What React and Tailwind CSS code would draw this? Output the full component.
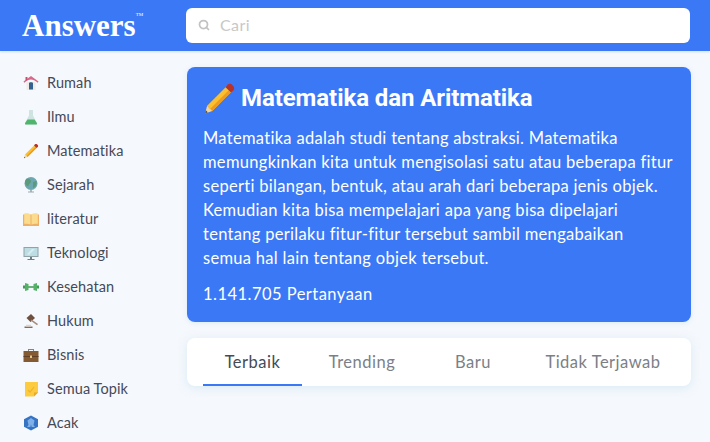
import React from 'react';
import { Search } from 'lucide-react';

const Pencil = ({ className }) => (
  <svg viewBox="0 0 32 32" className={className}>
    <path d="M22 5l5 5L9 28l-5-5z" fill="#fbc02d" />
    <path d="M25 8l2 2L9 28l-2-2z" fill="#ee9a1f" />
    <path d="M22 5l2-2.500c1-1 3-1 4 0l1.500 1.500c1 1 1 3 0 4L27 10z" fill="#b8322a" />
    <path d="M4 23l5 5-7 2.500z" fill="#f2d5a0" />
    <path d="M2.800 27.500l1.800 1.900-2.600 1.100z" fill="#4a4a4a" />
  </svg>
);

const House = () => (
  <svg viewBox="0 0 16 16" className="h-4 w-4">
    <path d="M3.500 7h9v8h-9z" fill="#f0ebe4" />
    <path d="M6 8c0-1 4-1 4 0v6.500H6z" fill="#35608f" />
    <path d="M8 1L0.500 6.500l.8 1.300C4 5.500 6 4.500 8 4.500s4 1 6.700 3.300l.8-1.300z" fill="#d9688a" />
    <path d="M2.500 2h2v2.500l-2 1.500z" fill="#c4546c" />
  </svg>
);

const Flask = () => (
  <svg viewBox="0 0 16 16" className="h-4 w-4">
    <path d="M6 1h4v5.500l4 7.500c.3 1-.3 1.500-1 1.500H3c-.7 0-1.300-.5-1-1.500l4-7.500z" fill="#cfe3e0" />
    <path d="M4.500 10.500h7l2.500 3.700c.2.800-.3 1.300-1 1.300H3c-.7 0-1.200-.5-1-1.300z" fill="#4fb56c" />
  </svg>
);

const Globe = () => (
  <svg viewBox="0 0 16 16" className="h-4 w-4">
    <circle cx="8" cy="6.500" r="6.500" fill="#6da7b0" />
    <path d="M4 1.500c3 0 4 1.500 4 3s-2 2-2.500 4-3.500-1-3.500-3 1-4 2-4zM10 5l3.500-1c.5 3-1 6-3.500 7z" fill="#5d9a7c" />
    <path d="M7.200 13h1.600v1.800H7.200zM5 14.600h6v.9H5z" fill="#9aaab2" />
  </svg>
);

const Book = () => (
  <svg viewBox="0 0 16 16" className="h-4 w-4">
    <path d="M0 3.500h16v11.500H0z" fill="#eeb066" />
    <path d="M1.200 2.500C4 2 6.500 2.500 7.500 3.500v10c-1.500-.8-4-1-6.300-.7zM14.800 2.500C12 2 9.500 2.500 8.500 3.500v10c1.500-.8 4-1 6.300-.7z" fill="#fbdc8e" />
  </svg>
);

const Monitor = () => (
  <svg viewBox="0 0 16 16" className="h-4 w-4">
    <path d="M0.500 2h15v10h-15z" fill="#8fa3a8" />
    <path d="M1.500 3h13v8h-13z" fill="#bcdde3" />
    <path d="M4 9l5-5h3l-6 6z" fill="#d7edf1" />
    <path d="M7 12h2v2H7zM4.500 14h7v.9h-7z" fill="#6f7d82" />
  </svg>
);

const Dumbbell = () => (
  <svg viewBox="0 0 16 16" className="h-4 w-4">
    <path d="M5 7h6v2H5z" fill="#6fae7c" />
    <path d="M0 6.500h2v3H0zM14 6.500h2v3h-2z" fill="#3f9a55" />
    <path d="M2 4l3.500 1v6L2 12zM14 4l-3.500 1v6l3.500 1z" fill="#53b266" />
  </svg>
);

const Gavel = () => (
  <svg viewBox="0 0 16 16" className="h-4 w-4">
    <path d="M3.500 5L8 1l4 4-4.500 4z" fill="#6f4f3e" />
    <path d="M8.500 6.500l6.500 4.500-1 1.300-6.500-4.800z" fill="#a58a78" />
    <path d="M1.500 13.500h8V15h-8z" fill="#8a6a55" />
    <path d="M3 11.800h5v1.700H3z" fill="#ddd3cb" />
  </svg>
);

const Briefcase = () => (
  <svg viewBox="0 0 16 16" className="h-4 w-4">
    <path d="M5 4V2h6v2h-1V3H6v1z" fill="#8d8177" />
    <path d="M0.500 4h15v11h-15z" fill="#845a32" />
    <path d="M0.500 9h15v1h-15z" fill="#5f4026" />
    <path d="M7 8.500h2v2.500H7z" fill="#e8c886" />
  </svg>
);

const Note = () => (
  <svg viewBox="0 0 16 16" className="h-4 w-4">
    <path d="M2 1h13v10.500L11 15.500H2z" fill="#fccb3f" />
    <path d="M15 11.500l-4 4v-4z" fill="#e8a92a" />
    <path d="M5 9l2 2 4-5" stroke="#efb32c" strokeWidth="1.200" fill="none" />
  </svg>
);

const Dice = () => (
  <svg viewBox="0 0 16 16" className="h-4 w-4">
    <path d="M8 0.500l7 3.700v7.600l-7 3.700-7-3.700V4.200z" fill="#3574c4" />
    <path d="M8 3l3.500 2.500-1 4.500 1.500 2H8.700L8 9.500 7.300 12H4l1.500-2-1-4.500z" fill="#7fb0e8" />
  </svg>
);

const topics = [
  { label: 'Rumah', icon: House },
  { label: 'Ilmu', icon: Flask },
  { label: 'Matematika', icon: () => <Pencil className="h-4 w-4" /> },
  { label: 'Sejarah', icon: Globe },
  { label: 'literatur', icon: Book },
  { label: 'Teknologi', icon: Monitor },
  { label: 'Kesehatan', icon: Dumbbell },
  { label: 'Hukum', icon: Gavel },
  { label: 'Bisnis', icon: Briefcase },
  { label: 'Semua Topik', icon: Note },
  { label: 'Acak', icon: Dice },
];

const description = [
  'Matematika adalah studi tentang abstraksi. Matematika',
  'memungkinkan kita untuk mengisolasi satu atau beberapa fitur',
  'seperti bilangan, bentuk, atau arah dari beberapa jenis objek.',
  'Kemudian kita bisa mempelajari apa yang bisa dipelajari',
  'tentang perilaku fitur-fitur tersebut sambil mengabaikan',
  'semua hal lain tentang objek tersebut.',
];

const App = () => {
  return (
    <div className="h-[442px] w-[710px] overflow-hidden bg-[#f5f8fd] font-['Lato',sans-serif]">
      <header className="flex h-[51px] items-center bg-[#3b78f6] shadow-[0_1px_2px_rgba(190,225,240,0.8)]">
        <div className="flex w-[186px] items-start pl-[22px] font-['Liberation_Serif',serif] text-[31px] leading-none font-bold text-white">
          Answers<span className="mt-[2px] text-[5px] leading-none font-normal">TM</span>
        </div>
        <div className="flex h-[35px] w-[504px] items-center gap-[10px] rounded-md bg-white pb-[2px] pl-3">
          <Search className="h-3 w-3 text-[#c2c2c2]" strokeWidth={3.500} />
          <span className="text-[16px] tracking-[0.4px] text-[#c8c8c8]">Cari</span>
        </div>
      </header>

      <div className="flex">
        <aside className="w-[187px] pt-[15px] pl-[23px]">
          {topics.map((topic) => {
            const Icon = topic.icon;
            return (
              <div key={topic.label} className="flex h-[34px] items-center gap-2 text-[14.500px] tracking-[0.1px] text-[#454a57]">
                <Icon />
                <span>{topic.label}</span>
              </div>
            );
          })}
        </aside>

        <main className="w-[504px] pt-4">
          <section className="h-[255px] rounded-lg bg-[#3b78f6] px-4 pt-[15px] text-white shadow-[0_1px_4px_rgba(190,225,240,0.5)]">
            <h1 className="flex h-[32px] items-center gap-[5px] font-['Roboto',sans-serif] text-[24px] font-bold tracking-[-0.08px]">
              <Pencil className="h-[33px] w-[33px]" />
              Matematika dan Aritmatika
            </h1>
            <div className="mt-[12px] text-[16.500px] leading-6 tracking-[0.3px] whitespace-nowrap">
              {description.map((line) => (
                <p key={line}>{line}</p>
              ))}
            </div>
            <p className="mt-3 text-[16.500px] leading-6 tracking-[0.47px]">1.141.705 Pertanyaan</p>
          </section>

          <nav className="mt-4 flex h-12 rounded-lg bg-white pl-4 text-center text-[16.500px] tracking-[0.5px] text-[#7b7f87] shadow-[0_2px_8px_rgba(190,225,235,0.5)]">
            <div className="w-[99px] border-b-2 border-[#3b78f6] pt-3 text-[#454a57]">Terbaik</div>
            <div className="w-[120px] pt-3">Trending</div>
            <div className="w-[102px] pt-3">Baru</div>
            <div className="w-[158px] pt-3">Tidak Terjawab</div>
          </nav>
        </main>
      </div>
    </div>
  );
};

export default App;
